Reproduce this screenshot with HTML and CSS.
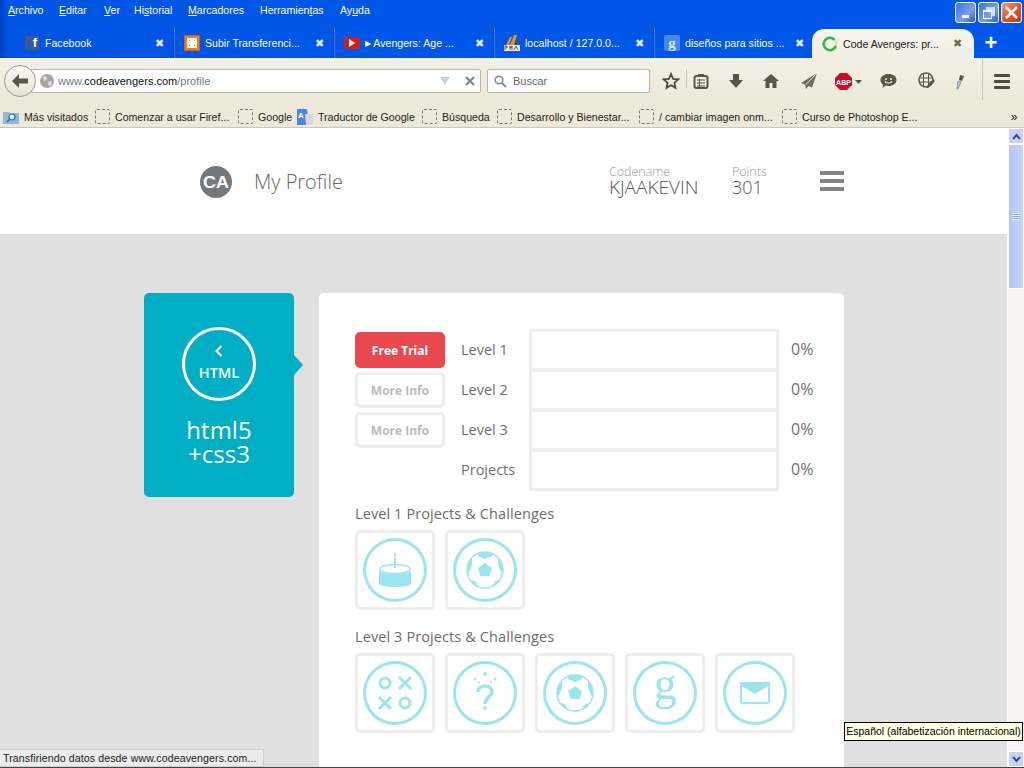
FILE: index.html
```html
<!DOCTYPE html>
<html lang="es">
<head>
    <meta charset="UTF-8">
    <title>Code Avengers: profile</title>
    <link rel="stylesheet" href="styles.css">
</head>
<body>
    <svg class="defs" width="0" height="0">
        <symbol id="ball" viewBox="0 0 64 64">
            <clipPath id="ballClip"><circle cx="32" cy="32" r="18"/></clipPath>
            <circle cx="32" cy="32" r="18" fill="none" stroke="#9be5ee" stroke-width="1.500"/>
            <g clip-path="url(#ballClip)" fill="#9be5ee">
                <polygon points="32,25 39,30 36.500,38 27.500,38 25,30"/>
                <polygon points="23,13 41,13 39,18 32,21 25,18"/>
                <polygon points="45,19 52,19 52,38 48,34 45,27"/>
                <polygon points="19,19 12,19 12,38 16,34 19,27"/>
                <polygon points="12,41 22,43 27,52 12,52"/>
                <polygon points="52,41 42,43 37,52 52,52"/>
            </g>
        </symbol>
    </svg>

    <div class="titlebar">
        <div class="menu">
            <span><u>A</u>rchivo</span>
            <span><u>E</u>ditar</span>
            <span><u>V</u>er</span>
            <span>Hi<u>s</u>torial</span>
            <span><u>M</u>arcadores</span>
            <span>Herramien<u>t</u>as</span>
            <span>Ay<u>u</u>da</span>
        </div>
        <div class="win-controls">
            <div class="win-btn"><span class="min-glyph"></span></div>
            <div class="win-btn"><span class="max-glyph"></span></div>
            <div class="win-btn win-close">
                <svg width="15" height="15" viewBox="0 0 15 15"><path d="M2 2l11 11M13 2L2 13" stroke="#fff" stroke-width="2.600"/></svg>
            </div>
        </div>
        <div class="tabs">
            <div class="tab">
                <span class="fav fav-fb">f</span><span class="tab-text">Facebook</span><span class="tab-x">✖</span>
            </div>
            <div class="tab">
                <span class="fav fav-xampp"><svg width="16" height="16" viewBox="0 0 16 16"><path d="M4 4h3v3H4zM9 4h3v3H9zM4 9h3v3H4zM9 9h3v3H9z" fill="none" stroke="#fff" stroke-width="2"/></svg></span><span class="tab-text">Subir Transferenci...</span><span class="tab-x">✖</span>
            </div>
            <div class="tab">
                <span class="fav fav-yt"><svg width="8" height="8" viewBox="0 0 8 8"><path d="M1 0l6 4-6 4z" fill="#fff"/></svg></span><span class="tab-text"><span class="play">▶</span> Avengers: Age ...</span><span class="tab-x">✖</span>
            </div>
            <div class="tab">
                <span class="fav fav-pma"><svg width="16" height="16" viewBox="0 0 16 16"><path d="M6 10L10 0h3l-3 10zM2 10L6 2h2L5 10z" fill="#f29111"/><rect y="10" width="16" height="6" fill="#f4f0d8"/><path d="M1 15v-4h2v2H2M6 15v-4l1 2 1-2v4M10 15l2-4 2 4" fill="none" stroke="#555" stroke-width="1"/></svg></span><span class="tab-text">localhost / 127.0.0...</span><span class="tab-x">✖</span>
            </div>
            <div class="tab">
                <span class="fav fav-g">g</span><span class="tab-text">diseños para sitios ...</span><span class="tab-x">✖</span>
            </div>
            <div class="tab tab-active">
                <svg class="spinner" width="16" height="16" viewBox="0 0 16 16"><circle cx="8" cy="8" r="6.200" fill="none" stroke="#c9e8c2" stroke-width="2.600"/><path d="M12.500 3.800A6.200 6.200 0 1 0 13.800 10" fill="none" stroke="#3cb54a" stroke-width="2.600"/></svg>
                <span class="tab-text">Code Avengers: pr...</span><span class="tab-x">✖</span>
            </div>
            <div class="tab-new">+</div>
        </div>
    </div>

    <div class="navbar">
        <div class="back-btn">
            <svg width="18" height="16" viewBox="0 0 18 16"><path d="M8 1L1 8l7 7V10.500h9v-5H8z" fill="#5a5646"/></svg>
        </div>
        <div class="urlbar">
            <svg class="globe" width="14" height="14" viewBox="0 0 14 14"><circle cx="7" cy="7" r="7" fill="#a5a5a5"/><path d="M3 3l3-1 1 3-3 2zM8 8l4-1-1 4-2 1z" fill="#e2e2e2"/></svg>
            <span class="url"><span class="url-dim">www.</span>codeavengers.com<span class="url-dim">/profile</span></span>
            <svg width="10" height="8" viewBox="0 0 10 8"><path d="M0 0h10L5 8z" fill="#c9d2d8"/></svg>
            <svg class="url-stop" width="10" height="10" viewBox="0 0 10 10"><path d="M1 1l8 8M9 1L1 9" stroke="#7c8790" stroke-width="2.200"/></svg>
        </div>
        <div class="searchbar">
            <svg width="13" height="13" viewBox="0 0 13 13"><circle cx="5" cy="5" r="3.800" fill="none" stroke="#8a8a8a" stroke-width="1.600"/><path d="M8 8l4 4" stroke="#8a8a8a" stroke-width="2"/></svg>
            <span>Buscar</span>
        </div>
        <div class="nav-icons">
            <svg class="nav-star" width="18" height="18" viewBox="0 0 18 18"><path d="M9 2l2.100 4.800 5.200.5-3.900 3.500 1.100 5.100L9 13.300l-4.500 2.600 1.100-5.100L1.700 7.300l5.200-.5z" fill="none" stroke="#4f4b3d" stroke-width="1.800"/></svg>
            <span class="nav-sep"></span>
            <svg class="nav-list" width="16" height="16" viewBox="0 0 16 16"><rect x="1.500" y="3" width="13" height="12" rx="2" fill="none" stroke="#5a5646" stroke-width="2"/><rect x="5" y="1" width="6" height="3" fill="#5a5646"/><path d="M4 7h8M4 10h8M4 13h8M6.500 6v8" stroke="#5a5646" stroke-width="1"/></svg>
            <svg class="nav-down" width="16" height="16" viewBox="0 0 16 16"><path d="M5 1h6v6h4l-7 8-7-8h4z" fill="#5a5646"/></svg>
            <svg class="nav-home" width="18" height="16" viewBox="0 0 18 16"><path d="M9 1L1 8h2.500v7h4v-5h3v5h4V8H17z" fill="#5a5646"/></svg>
            <svg class="nav-send" width="18" height="18" viewBox="0 0 18 18"><path d="M17 1L1 11l4 1.500 1 4.500 2.500-3 3.500 1.500z" fill="#6f6b5b"/><path d="M17 1L6 12.500" stroke="#ece9d8" stroke-width="1"/></svg>
            <span class="nav-abp"><svg width="17" height="17" viewBox="0 0 17 17"><polygon points="5,0 12,0 17,5 17,12 12,17 5,17 0,12 0,5" fill="#c70d2c"/><text x="8.500" y="11.500" text-anchor="middle" class="abp-text">ABP</text></svg><svg width="7" height="4" viewBox="0 0 7 4"><path d="M0 0h7L3.500 4z" fill="#4d5560"/></svg></span>
            <svg class="nav-chat" width="17" height="16" viewBox="0 0 17 16"><path d="M8.500 1C13 1 16.500 3.500 16.500 7s-3.500 6-8 6c-1 0-2 0-3-.4L2.500 15l.5-3.500C1.500 10.500.5 9 .5 7 .5 3.500 4 1 8.500 1z" fill="#5a5646"/><circle cx="6" cy="6" r="1" fill="#ece9d8"/><circle cx="11" cy="6" r="1" fill="#ece9d8"/><path d="M5 8.500c2 2 5 2 7 0" fill="none" stroke="#ece9d8" stroke-width="1.200"/></svg>
            <svg class="nav-web" width="17" height="17" viewBox="0 0 17 17"><circle cx="8" cy="8" r="7" fill="none" stroke="#5a5646" stroke-width="1.500"/><path d="M1 6h14M1 10h14M5.500 1v14M10.500 1v14" stroke="#5a5646" stroke-width="1"/><path d="M8 15l7-8 2 2-7 7z" fill="#5a5646"/></svg>
            <svg class="nav-drop" width="12" height="18" viewBox="0 0 12 18"><path d="M3 17l1-8 3 1-3 7z" fill="#b9c4d2" stroke="#7d8a9a" stroke-width=".8"/><path d="M5 8l1-5 4 1-2 5z" fill="#5a5646"/></svg>
            <span class="nav-sep nav-sep-tall"></span>
            <div class="nav-burger"><span></span><span></span><span></span></div>
        </div>
    </div>

    <div class="bookmarks">
        <div class="bm"><svg width="16" height="14" viewBox="0 0 16 14"><path d="M0 2h6l1 1h9v11H0z" fill="#8db8dc"/><circle cx="9" cy="7" r="3" fill="#dff0fb" stroke="#2f6ea5" stroke-width="1.200"/><path d="M7 9l-3 3" stroke="#2f6ea5" stroke-width="1.600"/></svg><span>Más visitados</span></div>
        <div class="bm"><i class="bm-blank"></i><span>Comenzar a usar Firef...</span></div>
        <div class="bm"><i class="bm-blank"></i><span>Google</span></div>
        <div class="bm"><svg width="16" height="16" viewBox="0 0 16 16"><path d="M0 0h10l2 16H0z" fill="#4a86e8"/><path d="M8 5h8v11H9z" fill="#d5d8de"/><text x="4" y="9" class="tr-text">A</text></svg><span>Traductor de Google</span></div>
        <div class="bm"><i class="bm-blank"></i><span>Búsqueda</span></div>
        <div class="bm"><i class="bm-blank"></i><span>Desarrollo y Bienestar...</span></div>
        <div class="bm"><i class="bm-blank"></i><span>/ cambiar imagen onm...</span></div>
        <div class="bm"><i class="bm-blank"></i><span>Curso de Photoshop E...</span></div>
        <div class="bm-more">»</div>
    </div>

    <div class="viewport">
        <div class="page">
            <header class="page-head">
                <svg class="logo" width="32" height="32" viewBox="0 0 32 32"><circle cx="16" cy="16" r="16" fill="#75787b"/><text x="16" y="21.500" text-anchor="middle" textLength="26" lengthAdjust="spacingAndGlyphs" class="logo-text">CA</text></svg>
                <div class="page-title">My Profile</div>
                <div class="stat stat-code"><small>Codename</small><b>KJAAKEVIN</b></div>
                <div class="stat stat-points"><small>Points</small><b>301</b></div>
                <div class="burger"><span></span><span></span><span></span></div>
            </header>
            <div class="content">
                <aside class="course">
                    <div class="course-ring">
                        <svg width="10" height="12" viewBox="0 0 10 12"><path d="M7.500 1L2.500 6l5 5" fill="none" stroke="#fff" stroke-width="2"/></svg>
                        <span>HTML</span>
                    </div>
                    <div class="course-name">html5<br>+css3</div>
                </aside>
                <main class="card">
                    <div class="levels">
                        <div class="level-btns">
                            <div class="btn btn-red">Free Trial</div>
                            <div class="btn">More Info</div>
                            <div class="btn">More Info</div>
                        </div>
                        <div class="level-rows">
                            <div class="level-row"><span class="level-name">Level 1</span><span class="level-bar"></span><span class="level-pct">0%</span></div>
                            <div class="level-row"><span class="level-name">Level 2</span><span class="level-bar"></span><span class="level-pct">0%</span></div>
                            <div class="level-row"><span class="level-name">Level 3</span><span class="level-bar"></span><span class="level-pct">0%</span></div>
                            <div class="level-row"><span class="level-name">Projects</span><span class="level-bar"></span><span class="level-pct">0%</span></div>
                        </div>
                    </div>

                    <h3>Level 1 Projects &amp; Challenges</h3>
                    <div class="tiles">
                        <div class="tile"><svg class="badge" viewBox="0 0 64 64">
                            <rect x="31" y="19" width="2" height="11" fill="#9be5ee"/>
                            <path d="M32 14c1 1.500 1.200 3 0 4.500-1.200-1.500-1-3 0-4.500z" fill="#9be5ee"/>
                            <ellipse cx="32" cy="31" rx="15" ry="4.500" fill="none" stroke="#9be5ee" stroke-width="1.600"/>
                            <path d="M16 33c3 3.500 29 3.500 32 0v13c-3 4-29 4-32 0z" fill="#9be5ee"/>
                        </svg></div>
                        <div class="tile"><svg class="badge"><use href="#ball"/></svg></div>
                    </div>

                    <h3>Level 3 Projects &amp; Challenges</h3>
                    <div class="tiles">
                        <div class="tile"><svg class="badge" viewBox="0 0 64 64">
                            <g fill="none" stroke="#9be5ee" stroke-width="3">
                                <circle cx="22" cy="22" r="5"/>
                                <circle cx="42" cy="42" r="5"/>
                                <path d="M36 16l12 12M48 16L36 28M16 36l12 12M28 36L16 48"/>
                            </g>
                        </svg></div>
                        <div class="tile"><svg class="badge" viewBox="0 0 64 64">
                            <g fill="#9be5ee">
                                <circle cx="32" cy="13" r="2"/>
                                <circle cx="22" cy="18" r="1.400"/>
                                <circle cx="42" cy="18" r="1.400"/>
                                <circle cx="26" cy="21" r="1"/>
                                <circle cx="38" cy="21" r="1"/>
                                <circle cx="32" cy="47" r="2"/>
                            </g>
                            <path d="M25 31c0-4 3-6 7-6s7 2 7 6c0 5-7 5-7 12" fill="none" stroke="#9be5ee" stroke-width="3.500"/>
                        </svg></div>
                        <div class="tile"><svg class="badge"><use href="#ball"/></svg></div>
                        <div class="tile"><svg class="badge" viewBox="0 0 64 64">
                            <text x="32" y="38" text-anchor="middle" class="badge-g">g</text>
                        </svg></div>
                        <div class="tile"><svg class="badge" viewBox="0 0 64 64">
                            <rect x="18" y="22" width="28" height="20" rx="2" fill="none" stroke="#9be5ee" stroke-width="2"/>
                            <path d="M17 21h30v3L32 33 17 24z" fill="#9be5ee"/>
                        </svg></div>
                    </div>
                </main>
            </div>
        </div>
        <div class="scrollbar">
            <div class="sb-btn"><svg width="9" height="7" viewBox="0 0 9 7"><path d="M1 6l3.500-4L8 6" fill="none" stroke="#2e4f93" stroke-width="2"/></svg></div>
            <div class="sb-thumb"><span></span></div>
            <div class="sb-track"></div>
            <div class="sb-btn"><svg width="9" height="7" viewBox="0 0 9 7"><path d="M1 1l3.500 4L8 1" fill="none" stroke="#2e4f93" stroke-width="2"/></svg></div>
        </div>
    </div>

    <div class="status">Transfiriendo datos desde www.codeavengers.com...</div>
    <div class="tooltip">Español (alfabetización internacional)</div>
</body>
</html>
```

FILE: styles.css
```css
html, body {
    margin: 0;
    height: 100%;
    overflow: hidden;
}

body {
    position: relative;
    display: flex;
    flex-direction: column;
    width: 1024px;
    height: 768px;
    font-family: 'Liberation Sans', sans-serif;
    font-size: 10.600px;
    color: #222;
    background: #ece9d8;
}

.defs {
    position: absolute;
}

/* title bar + tabs */
.titlebar {
    position: relative;
    height: 58px;
    flex: none;
    background: linear-gradient(90deg, #0040c8 0, #0055e5 8px, #0057e7 100%);
    color: #fff;
}

.menu {
    display: grid;
    grid-template-columns: 51px 45px 30px 54px 72px 80px auto;
    padding: 3px 0 0 8px;
    height: 28px;
    box-sizing: border-box;
    line-height: 15px;
}

.win-controls {
    position: absolute;
    top: 2px;
    right: 2px;
    display: flex;
    gap: 2px;
}

.win-btn {
    width: 19px;
    height: 19px;
    border: 1px solid #fff;
    border-radius: 3px;
    background: linear-gradient(135deg, #3c6fe0, #7aa0f0 60%, #2a55c8);
    display: flex;
    align-items: center;
    justify-content: center;
    position: relative;
}

.win-close {
    background: linear-gradient(135deg, #f0a080, #e0552c 50%, #c23a12);
}

.min-glyph {
    width: 7px;
    height: 3px;
    background: #fff;
    margin-top: 8px;
    margin-right: 1px;
}

.max-glyph {
    width: 7px;
    height: 6px;
    border: 1px solid #fff;
    border-top-width: 2px;
    margin-top: 3px;
    margin-right: 3px;
    box-shadow: 3px -3px 0 -1px #0000, 3px -3px 0 0 #ffffffb0;
}

.tabs {
    display: flex;
    height: 30px;
    padding-left: 14px;
}

.tab {
    width: 160px;
    box-sizing: border-box;
    padding: 0 9px 0 10px;
    display: flex;
    align-items: center;
    border-right: 1px solid #123f9e;
    box-shadow: 1px 0 0 #3a78ea;
}

.tab:first-child {
    padding-left: 11px;
}

.tab:nth-child(5) {
    padding-right: 10px;
    border-right: none;
    box-shadow: none;
}

.tab-text {
    flex: 1;
    margin-left: 5px;
    white-space: nowrap;
    overflow: hidden;
}

.play {
    font-size: 8px;
    vertical-align: 1px;
}

.tab-x {
    font-size: 11px;
    color: #e4ebf7;
}

.tab-active {
    width: 162px;
    height: 29px;
    margin: 1px 0 0 -2px;
    padding: 0 12px 0 10px;
    border: none;
    box-shadow: none;
    background: linear-gradient(#f6f4ec, #f2efe4);
    border-radius: 12px 12px 0 0;
    color: #222;
}

.tab-active .tab-x {
    color: #6e6a58;
}

.tab-new {
    width: 34px;
    text-align: center;
    font-size: 22px;
    font-weight: 700;
    line-height: 30px;
}

.fav {
    width: 16px;
    height: 16px;
    flex: none;
    display: flex;
    align-items: center;
    justify-content: center;
}

.fav-fb {
    width: 14px;
    height: 14px;
    margin-right: 1px;
    background: #3b5998;
    font: 700 13px/14px 'Liberation Sans', sans-serif;
    align-items: flex-end;
    justify-content: flex-end;
    padding-right: 2px;
    box-sizing: border-box;
}

.fav-xampp {
    background: #f77a1c;
    outline: 1px solid #d06010;
    outline-offset: -1px;
}

.fav-yt {
    height: 12px;
    background: #cd201f;
    border-radius: 3px;
}

.fav-g {
    background: #4a86e8;
    border-radius: 2px;
    font: 700 15px/12px 'Liberation Serif', serif;
    color: #d6e4fb;
}

/* nav bar */
.navbar {
    position: relative;
    height: 42px;
    flex: none;
    box-sizing: border-box;
    padding: 11px 0 0 30px;
    display: flex;
    background: linear-gradient(#f3f1e8, #ece9d8);
}

.back-btn {
    position: absolute;
    left: 4px;
    top: 7px;
    width: 30px;
    height: 30px;
    border: 1px solid #9a9a92;
    border-radius: 50%;
    background: linear-gradient(#fbfaf6, #e6e3d6);
    display: flex;
    align-items: center;
    justify-content: center;
    z-index: 1;
}

.urlbar, .searchbar {
    height: 24px;
    box-sizing: border-box;
    background: #fff;
    border: 1px solid #b6b6ad;
    border-radius: 2px;
    display: flex;
    align-items: center;
    font-size: 11px;
}

.urlbar {
    width: 451px;
    padding: 0 5px 0 9px;
    gap: 4px;
}

.url {
    flex: 1;
    color: #111;
}

.url-dim {
    color: #777;
}

.url-stop {
    margin-left: 11px;
}

.searchbar {
    width: 163px;
    margin-left: 6px;
    padding-left: 6px;
    gap: 6px;
    color: #666;
}

.nav-icons {
    position: relative;
    flex: 1;
    height: 24px;
}

.nav-icons > * {
    position: absolute;
    top: 3px;
}

.nav-star { left: 12px; }
.nav-sep { left: 36px; top: 0; width: 1px; height: 19px; background: #c8c5b5; }
.nav-list { left: 43px; top: 4px; }
.nav-down { left: 78px; top: 4px; }
.nav-home { left: 112px; top: 4px; }
.nav-send { left: 150px; top: 3px; }
.nav-abp { left: 185px; top: 4px; display: flex; gap: 3px; align-items: center; }
.nav-chat { left: 230px; top: 4px; }
.nav-web { left: 268px; top: 3px; }
.nav-drop { left: 304px; top: 3px; }
.nav-sep-tall { left: 332px; top: -11px; height: 42px; }

.nav-burger {
    left: 344px;
    top: 5px;
    width: 16px;
    display: flex;
    flex-direction: column;
    gap: 3px;
}

.nav-burger span {
    height: 3px;
    background: #4f4b3d;
    border-radius: 1px;
}

.abp-text {
    font: 700 7px 'Liberation Sans', sans-serif;
    fill: #fff;
}

/* bookmarks */
.bookmarks {
    height: 28px;
    flex: none;
    box-sizing: border-box;
    padding: 6px 0 0 3px;
    display: grid;
    grid-template-columns: 92px 143px 59px 125px 75px 142px 143px 1fr 20px;
    align-items: center;
    background: #ece9d8;
    border-bottom: 1px solid #c9c7bb;
}

.bm {
    display: flex;
    align-items: center;
    gap: 5px;
    white-space: nowrap;
    overflow: hidden;
}

.bm-blank {
    width: 13px;
    height: 13px;
    flex: none;
    border: 1px dashed #777;
    border-radius: 2px;
}

.bm-more {
    font-size: 12px;
    text-align: center;
}

.tr-text {
    font: 700 8px 'Liberation Sans', sans-serif;
    fill: #fff;
    text-anchor: middle;
}

/* page */
.viewport {
    flex: 1;
    display: flex;
    min-height: 0;
    border-bottom: 1px solid #444;
}

.page {
    flex: 1;
    overflow: hidden;
    background: #e0e0e0;
    font-family: 'Open Sans', sans-serif;
}

.page-head {
    height: 106px;
    box-sizing: border-box;
    background: #fff;
    padding: 0 0 0 200px;
    display: flex;
    align-items: center;
    position: relative;
}

.logo {
    margin-top: 1px;
}

.logo-text {
    font: 700 17px 'Liberation Sans', sans-serif;
    fill: #fff;
}

.page-title {
    margin-left: 22px;
    font-size: 20px;
    font-weight: 300;
    color: #666;
}

.stat {
    display: flex;
    flex-direction: column;
    margin-top: -1px;
}

.stat small {
    font-size: 12.500px;
    font-weight: 300;
    line-height: 13px;
    color: #999;
}

.stat b {
    font-size: 19px;
    font-weight: 300;
    line-height: 19px;
    color: #555;
}

.stat-points b {
    font-size: 18px;
}

.stat-code {
    margin-left: 266px;
    width: 123px;
}

.stat-points {
    width: 88px;
}

.burger {
    width: 24px;
    display: flex;
    flex-direction: column;
    gap: 4px;
}

.burger span {
    height: 4px;
    background: #808285;
}

.content {
    display: flex;
    gap: 25px;
    padding: 59px 0 0 144px;
}

.course {
    position: relative;
    width: 150px;
    height: 204px;
    box-sizing: border-box;
    padding-top: 34px;
    background: #00afc6;
    border-radius: 5px;
    color: #fff;
    display: flex;
    flex-direction: column;
    align-items: center;
}

.course::after {
    content: "";
    position: absolute;
    left: 150px;
    top: 62px;
    border-left: 9px solid #00afc6;
    border-top: 10px solid transparent;
    border-bottom: 10px solid transparent;
}

.course-ring {
    width: 74px;
    height: 74px;
    box-sizing: border-box;
    border: 3px solid #fff;
    border-radius: 50%;
    display: flex;
    flex-direction: column;
    align-items: center;
    gap: 6px;
    padding-top: 15px;
    font-size: 14.500px;
    font-weight: 600;
    line-height: 19px;
}

.course-name {
    margin-top: 17px;
    font-size: 24px;
    line-height: 24px;
    text-align: center;
}

.card {
    width: 525px;
    height: 600px;
    box-sizing: border-box;
    padding: 36px 0 0 36px;
    background: #fff;
    border-radius: 5px 5px 0 0;
}

.levels {
    display: flex;
}

.level-btns {
    width: 90px;
    padding-top: 3px;
    display: flex;
    flex-direction: column;
    gap: 4px;
}

.btn {
    height: 36px;
    box-sizing: border-box;
    border: 3px solid #eee;
    border-radius: 5px;
    font-size: 12px;
    font-weight: 700;
    line-height: 32px;
    text-align: center;
    color: #bbb;
}

.btn-red {
    background: #e9494e;
    border-color: #e9494e;
    color: #fff;
}

.level-rows {
    margin-left: 16px;
}

.level-row {
    display: flex;
    align-items: center;
    height: 40px;
    font-size: 14.500px;
    color: #707070;
}

.level-name {
    width: 68px;
}

.level-bar {
    width: 250px;
    height: 42px;
    box-sizing: border-box;
    border: 3px solid #eee;
    margin-bottom: -2px;
}

.level-pct {
    margin-left: 12px;
    font-size: 16px;
}

h3 {
    margin: 15px 0 0;
    font-size: 14.500px;
    font-weight: 500;
    letter-spacing: .1px;
    line-height: 20px;
    color: #6c6c6c;
}

.tiles + h3 {
    margin-top: 17px;
}

.tiles {
    display: flex;
    gap: 10px;
    margin-top: 6px;
}

.tile {
    width: 80px;
    height: 80px;
    box-sizing: border-box;
    border: 3px solid #eee;
    border-radius: 5px;
    padding: 5px;
}

.badge {
    display: block;
    width: 64px;
    height: 64px;
    border-radius: 50%;
    box-shadow: inset 0 0 0 3px #9be5ee;
}

.badge-g {
    font: 400 46px 'Liberation Serif', serif;
    fill: #9be5ee;
}

/* scrollbar */
.scrollbar {
    width: 16px;
    flex: none;
    display: flex;
    flex-direction: column;
    border-left: 1px solid #fff;
    background: #f6f5ef;
}

.sb-btn {
    height: 16px;
    flex: none;
    background: #c5d4f6;
    border: 1px solid #fff;
    box-sizing: border-box;
    display: flex;
    align-items: center;
    justify-content: center;
}

.sb-thumb {
    height: 145px;
    flex: none;
    box-sizing: border-box;
    background: linear-gradient(90deg, #b4c6f6, #c6d3fa);
    border: 1px solid #fff;
    display: flex;
    align-items: center;
    justify-content: center;
}

.sb-thumb span {
    width: 8px;
    height: 7px;
    background: repeating-linear-gradient(#eef2ff 0 1px, #8fa8e8 1px 2px);
}

.sb-track {
    flex: 1;
}

.status {
    position: absolute;
    left: 0;
    bottom: 1px;
    width: 264px;
    height: 18px;
    box-sizing: border-box;
    padding-left: 3px;
    background: #ebebeb;
    border: 1px solid #cfcfcf;
    border-left: none;
    font-size: 10.600px;
    letter-spacing: .1px;
    line-height: 16px;
    white-space: nowrap;
    overflow: hidden;
}

.tooltip {
    position: absolute;
    left: 844px;
    top: 722px;
    width: 179px;
    height: 19px;
    box-sizing: border-box;
    background: #ffffe1;
    border: 1px solid #000;
    font-size: 10.500px;
    line-height: 17px;
    text-align: center;
    color: #000;
    white-space: nowrap;
}
```
